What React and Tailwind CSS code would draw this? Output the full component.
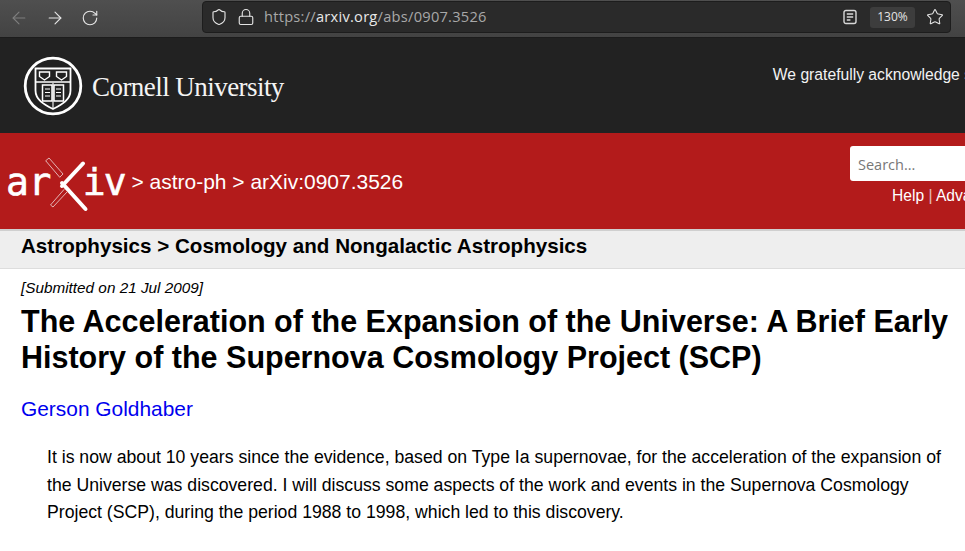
import React from "react";
import { ArrowLeft, ArrowRight, RotateCw, Shield, Lock, Star } from "lucide-react";

const sans = "font-['Liberation_Sans',Arial,sans-serif]";

const ReaderIcon = () => (
  <svg width="14" height="16" viewBox="0 0 14 16" fill="none" stroke="#d8d8d8" strokeWidth="1.4">
    <rect x="1" y="1.5" width="12" height="13" rx="2" />
    <path d="M3.8 5h6.4M3.8 8h6.4M3.8 11h3.6" />
  </svg>
);

const CornellSeal = () => (
  <svg width="60" height="60" viewBox="0 0 60 60" fill="none" stroke="#fff">
    <circle cx="30" cy="30" r="27.8" strokeWidth="2.8" />
    <path d="M12.500 12.500h35v22c0 9-8 14-17.500 18.500-9.500-4.500-17.500-9.500-17.500-18.500z" strokeWidth="1.8" />
    <path d="M12.500 26h35" strokeWidth="1.6" />
    <path d="M16.500 16h10v4.500l-5 3.500-5-3.500zM33.500 16h10v4.500l-5 3.500-5-3.500z" strokeWidth="1.4" />
    <path d="M19.500 29h9.500v16h-9.500zM31 29h9.500v16h-9.500z" strokeWidth="1.5" />
    <path d="M22 33h5M22 36.500h5M22 40h5M33 33h5M33 36.500h5M33 40h5M30 27v26" strokeWidth="1.1" />
  </svg>
);

const ArxivCross = () => (
  <svg width="46" height="56" viewBox="0 0 46 56" fill="none" strokeLinecap="round" className="-ml-[7px] -mr-[7px] mt-[6px] shrink-0">
    <path d="M2 4.500 5 2 19 18 16 21z" stroke="#e8c4c4" strokeWidth="0.9" />
    <path d="M18 27 41.500 53" stroke="#fff" strokeWidth="4" />
    <path d="M39 7.500 18 30" stroke="#fff" strokeWidth="4" />
    <path d="M23 36 9 51 6.500 49 20 33.500" stroke="#e8c4c4" strokeWidth="0.9" />
  </svg>
);

const Toolbar = () => (
  <div className="h-[38px] flex items-start bg-gradient-to-b from-[#4f4f4f] to-[#434343] border-b border-[#1c1c1c]">
    <div className="flex items-center gap-[16px] pl-[9px] h-[36px] w-[202px] shrink-0">
      <ArrowLeft size={20} strokeWidth={1.3} className="text-[#7f7f7f]" />
      <ArrowRight size={20} strokeWidth={1.3} className="text-[#e6e6e6]" />
      <RotateCw size={18} strokeWidth={1.5} className="text-[#e6e6e6]" />
    </div>
    <div className="w-[749px] h-[32px] mt-[1px] flex items-center rounded-[4px] bg-[#2a2a2a] border border-[#1d1d1d] pl-[7px] pr-[6px]">
      <Shield size={18} strokeWidth={1.5} className="text-[#e4e4e4]" />
      <Lock size={18} strokeWidth={1.5} className="ml-[9px] text-[#e4e4e4]" />
      <span className="ml-[9px] font-['Open_Sans',sans-serif] text-[14.650px] tracking-[0.25px] text-[#a8a8a8]">
        https://<span className="text-[#e8e8e8]">arxiv.org</span>/abs/0907.3526
      </span>
      <div className="ml-auto flex items-center">
        <ReaderIcon />
        <span className="ml-[13px] w-[45px] h-[21px] flex items-center justify-center rounded-[3px] bg-[#3d3d3d] font-['Open_Sans',sans-serif] text-[12px] text-[#e4e4e4]">
          130%
        </span>
        <Star size={18} strokeWidth={1.4} className="ml-[11px] text-[#e4e4e4]" />
      </div>
    </div>
  </div>
);

const CornellBar = () => (
  <div className="h-[95px] bg-[#222222] flex items-center">
    <div className="flex items-center pl-[23px] shrink-0">
      <CornellSeal />
      <span className="ml-[9px] mt-[3px] font-['Liberation_Serif',serif] text-[27px] tracking-[-0.55px] text-[#f4f4f4]">
        Cornell University
      </span>
    </div>
    <div className={`ml-[489px] -mt-[22px] shrink-0 whitespace-nowrap text-[15.680px] text-[#f2f2f2] ${sans}`}>
      We gratefully acknowledge support from
    </div>
  </div>
);

const ArxivBar = () => (
  <div className={`h-[96px] bg-[#b31b1b] flex items-center text-white ${sans}`}>
    <div className="flex items-center pl-[6px] w-[850px] shrink-0">
      <span className="font-['DejaVu_Sans_Mono',monospace] text-[38px] leading-none tracking-[-0.500px] mt-[2px] [-webkit-text-stroke:0.6px_white]">ar</span>
      <ArxivCross />
      <span className="font-['DejaVu_Sans_Mono',monospace] text-[38px] leading-none tracking-[-2px] mt-[2px] [-webkit-text-stroke:0.6px_white]">iv</span>
      <span className="ml-[7px] mt-[2px] text-[20.980px]">&gt; astro-ph &gt; arXiv:0907.3526</span>
    </div>
    <div className="shrink-0 -mt-[8px]">
      <div className="w-[200px] h-[35px] bg-white rounded-[3px] flex items-center pl-[8px] pt-[2px] font-['Open_Sans',sans-serif] text-[14.500px] text-[#777777]">
        Search...
      </div>
      <div className="mt-[3px] ml-[42px] whitespace-nowrap text-[15.600px]">
        Help <span className="opacity-70">|</span> Advanced Search
      </div>
    </div>
  </div>
);

export default function App() {
  return (
    <div className="w-[965px] h-[551px] overflow-hidden bg-white">
      <Toolbar />
      <CornellBar />
      <ArxivBar />
      <div className={`h-[40px] flex items-center pl-[21px] pb-[6px] bg-[#eeeeee] border-t-2 border-b border-t-[#cfcfcf] border-b-[#dddddd] ${sans} font-bold text-[20.600px] text-black`}>
        Astrophysics &gt; Cosmology and Nongalactic Astrophysics
      </div>
      <div className={`pl-[21px] pr-[10px] ${sans} text-black`}>
        <div className="mt-[9px] text-[15.300px] leading-[19px] italic">[Submitted on 21 Jul 2009]</div>
        <h1 className="mt-[6px] text-[30.500px] leading-[36px] font-bold">
          The Acceleration of the Expansion of the Universe: A Brief Early History of the Supernova Cosmology Project (SCP)
        </h1>
        <div className="mt-[22px] text-[20.900px] leading-[24px] text-[#0000ee]">Gerson Goldhaber</div>
        <p className="mt-[23px] pl-[26px] pr-[10px] text-[17.670px] leading-[27.500px]">
          It is now about 10 years since the evidence, based on Type Ia supernovae, for the acceleration of the expansion of the Universe was discovered. I will discuss some aspects of the work and events in the Supernova Cosmology Project (SCP), during the period 1988 to 1998, which led to this discovery.
        </p>
      </div>
    </div>
  );
}
